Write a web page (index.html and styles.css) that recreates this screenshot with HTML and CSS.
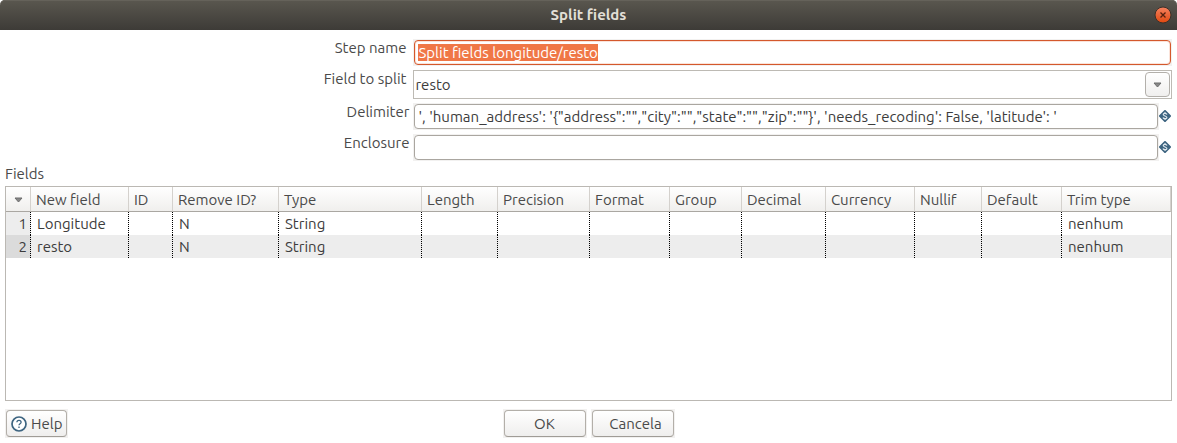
FILE: index.html
```html
<!DOCTYPE html>
<html lang="en">
<head>
<meta charset="utf-8">
<title>Split fields</title>
<link rel="stylesheet" href="styles.css">
</head>
<body>
<main class="dialog">
  <header class="titlebar">
    <h1 class="title">Split fields</h1>
    <button class="close" type="button" aria-label="Close">
      <svg viewBox="0 0 18 18" width="18" height="18" aria-hidden="true">
        <defs><linearGradient id="closeFill" x1="0" y1="0" x2="0" y2="1"><stop offset="0" stop-color="#f58260"/><stop offset="1" stop-color="#e0480f"/></linearGradient></defs>
        <circle cx="9" cy="9" r="8" fill="url(#closeFill)" stroke="#3a3029"/>
        <path d="M6.500 6.500l5 5M11.500 6.500l-5 5" stroke="#54210f" stroke-width="1.300"/>
      </svg>
    </button>
  </header>

  <form class="content">
    <div class="row">
      <label class="label" for="step">Step name</label>
      <span class="halo"><input class="text" id="step" type="text" value="Split fields longitude/resto" autofocus></span>
    </div>
    <div class="row">
      <label class="label" for="field">Field to split</label>
      <span class="combo">
        <select class="select" id="field"><option>resto</option></select>
        <span class="combo-button"><svg viewBox="0 0 9 6" width="9" height="6" aria-hidden="true"><path d="M1 1h7L4.500 5z" fill="#888" stroke="#6c6c6c"/></svg></span>
      </span>
    </div>
    <div class="row">
      <label class="label label-wide" for="delimiter">Delimiter</label>
      <span class="halo"><input class="text" id="delimiter" type="text" value="', 'human_address': '{&quot;address&quot;:&quot;&quot;,&quot;city&quot;:&quot;&quot;,&quot;state&quot;:&quot;&quot;,&quot;zip&quot;:&quot;&quot;}', 'needs_recoding': False, 'latitude': '"></span>
      <svg class="variable" viewBox="0 0 12 12" width="12" height="12" aria-hidden="true"><path d="M6 1l5 5-5 5-5-5z" fill="#3d6480" stroke="#3d6480" stroke-width="2" stroke-linejoin="round"/><path d="M8 4.500C7.500 3 4.200 3 4.200 4.600S7.900 5.800 7.900 7.500 4.500 9 4 7.500M6 2v1.500M6 8.500V10" fill="none" stroke="#dfe8ee" stroke-width="1.200"/></svg>
    </div>
    <div class="row">
      <label class="label label-wide" for="enclosure">Enclosure</label>
      <span class="halo"><input class="text" id="enclosure" type="text"></span>
      <svg class="variable" viewBox="0 0 12 12" width="12" height="12" aria-hidden="true"><path d="M6 1l5 5-5 5-5-5z" fill="#3d6480" stroke="#3d6480" stroke-width="2" stroke-linejoin="round"/><path d="M8 4.500C7.500 3 4.200 3 4.200 4.600S7.900 5.800 7.900 7.500 4.500 9 4 7.500M6 2v1.500M6 8.500V10" fill="none" stroke="#dfe8ee" stroke-width="1.200"/></svg>
    </div>

    <h2 class="caption" id="fields">Fields</h2>
    <div class="panel">
      <table class="table" aria-labelledby="fields">
        <colgroup><col class="w-index"><col class="w-name"><col class="w-id"><col class="w-remove"><col class="w-type"><col class="w-length"><col class="w-precision"><col class="w-format"><col class="w-group"><col class="w-decimal"><col class="w-currency"><col class="w-nullif"><col class="w-default"><col></colgroup>
        <thead>
          <tr><th class="sort"><svg viewBox="0 0 9 6" width="9" height="6" aria-hidden="true"><path d="M1 1h7L4.500 5z" fill="#888" stroke="#6c6c6c"/></svg></th><th>New field</th><th>ID</th><th>Remove ID?</th><th>Type</th><th>Length</th><th>Precision</th><th>Format</th><th>Group</th><th>Decimal</th><th>Currency</th><th>Nullif</th><th>Default</th><th>Trim type</th></tr>
        </thead>
        <tbody>
          <tr><td class="index">1</td><td>Longitude</td><td></td><td>N</td><td>String</td><td></td><td></td><td></td><td></td><td></td><td></td><td></td><td></td><td>nenhum</td></tr>
          <tr><td class="index">2</td><td>resto</td><td></td><td>N</td><td>String</td><td></td><td></td><td></td><td></td><td></td><td></td><td></td><td></td><td>nenhum</td></tr>
        </tbody>
      </table>
    </div>

    <footer class="actions">
      <div><span class="halo-button"><button class="button" type="button">
        <svg viewBox="0 0 16 16" width="16" height="16" aria-hidden="true"><circle cx="8" cy="8" r="7" fill="#fff" stroke="#3d6480" stroke-width="1.700"/><path d="M5.900 6.300c0-2.600 4.200-2.600 4.200 0C10.100 7.700 8 7.700 8 9.300M8 10.600v1.400" fill="none" stroke="#3d6480" stroke-width="1.300"/></svg>
        Help</button></span></div>
      <div class="actions-main">
        <span class="halo-button"><button class="button button-main" type="button">OK</button></span>
        <span class="halo-button"><button class="button button-main button-cancel" type="button">Cancela</button></span>
      </div>
    </footer>
  </form>
</main>
<script src="main.js"></script>
</body>
</html>
```
FILE: styles.css
```css
* { box-sizing: border-box; }

body {
  margin: 0;
  background: #fff;
  color: #4a4a4a;
  font: 15px/18px Ubuntu, "Noto Sans", "Open Sans", sans-serif;
}

input, select, button { font: inherit; color: inherit; margin: 0; }

.dialog {
  display: flex;
  flex-direction: column;
  min-height: 100vh;
}

.titlebar {
  display: grid;
  grid-template-columns: 1fr auto 1fr;
  align-items: center;
  height: 30px;
  padding: 0 5px;
  border-radius: 5px 5px 0 0;
  background: linear-gradient(#5a574f, #3d3b37);
  box-shadow: inset 0 1px #65625a;
}

.title {
  grid-column: 2;
  margin: 0;
  color: #e2dfd6;
  font-size: 15px;
  font-weight: 700;
}

.close {
  justify-self: end;
  display: flex;
  padding: 0;
  border: 0;
  background: none;
}

.content {
  flex: 1;
  display: flex;
  flex-direction: column;
  gap: 4px;
  padding: 9px 5px 5px;
}

.row { display: flex; }

.label {
  flex: 0 0 35%;
  padding-right: 7px;
  text-align: right;
}

.label-wide { padding-right: 4px; }

.halo {
  flex: 1;
  display: flex;
  padding: 1px;
  background: #f2f1f0;
}

.text {
  flex: 1;
  min-width: 0;
  height: 25px;
  padding: 0 3px 1px;
  border: 1px solid #aaa6a0;
  border-radius: 4px;
  background: #fff;
  color: #3c3c3c;
  outline: 0;
}

.text:focus { border-color: #d4582c; box-shadow: inset 0 0 0 1px #fbe3d9; }
.text::selection { background: #f07746; color: #fff; }

.combo {
  flex: 1;
  position: relative;
  display: flex;
}

.select {
  flex: 1;
  height: 29px;
  padding: 0 1px;
  border: 1px solid #bdbab4;
  border-radius: 0;
  background: #fff;
  color: #3c3c3c;
  appearance: none;
}

.combo-button {
  position: absolute;
  top: 2px;
  right: 2px;
  bottom: 2px;
  display: grid;
  place-items: center;
  width: 25px;
  border: 1px solid #b3b0ab;
  border-radius: 4px;
  background: linear-gradient(#fff, #f0efee);
  pointer-events: none;
}

.variable {
  flex: none;
  align-self: center;
  margin: 0 1px 2px 0;
}

.caption {
  margin: 0 0 -1px;
  font-size: 15px;
  font-weight: 400;
}

.panel {
  flex: 1;
  margin-bottom: 4px;
  border: 1px solid #bbb8b3;
}

.table {
  width: 100%;
  table-layout: fixed;
  border-collapse: separate;
  border-spacing: 0;
}

.table th {
  height: 25px;
  padding: 2px 0 0 5px;
  border-right: 1px solid #d4d1cd;
  border-bottom: 1px solid #aaa7a2;
  background: linear-gradient(#fff, #f0efed);
  font-weight: 400;
  text-align: left;
  white-space: nowrap;
}

.table .sort { padding-left: 8px; }
.sort svg { display: block; }

.table td {
  height: 23px;
  padding: 0 0 0 6px;
  border-right: 1px dotted #000;
  color: #3c3c3c;
}

.table td:last-child { border-right: 0; }
.table tbody tr:nth-child(even) { background: #ededed; }

.table .index {
  padding: 0 3px 0 0;
  background: #ededed;
  text-align: right;
}

.table tr:nth-child(even) .index { background: #dbdbdb; }

.w-index { width: 25px; }
.w-name { width: 98px; }
.w-id { width: 44px; }
.w-remove { width: 106px; }
.w-type { width: 143px; }
.w-length { width: 76px; }
.w-precision { width: 92px; }
.w-format { width: 80px; }
.w-group { width: 72px; }
.w-decimal { width: 84px; }
.w-currency { width: 89px; }
.w-nullif { width: 67px; }
.w-default { width: 80px; }

.actions {
  display: grid;
  grid-template-columns: 1fr auto 1fr;
}

.actions-main { display: flex; gap: 4px; }

.halo-button {
  display: inline-flex;
  padding: 1px;
  background: #f2f1f0;
}

.button {
  display: flex;
  align-items: center;
  justify-content: center;
  gap: 4px;
  height: 27px;
  padding: 0 4px;
  border: 1px solid #b3afa9;
  border-bottom-color: #a09c96;
  border-radius: 4px;
  background: linear-gradient(#fff, #efeeed);
}

.button-main { width: 82px; }
.button-cancel { padding-left: 10px; }
```
FILE: main.js
```js
const step = document.getElementById("step");
step.focus();
step.select();
```
